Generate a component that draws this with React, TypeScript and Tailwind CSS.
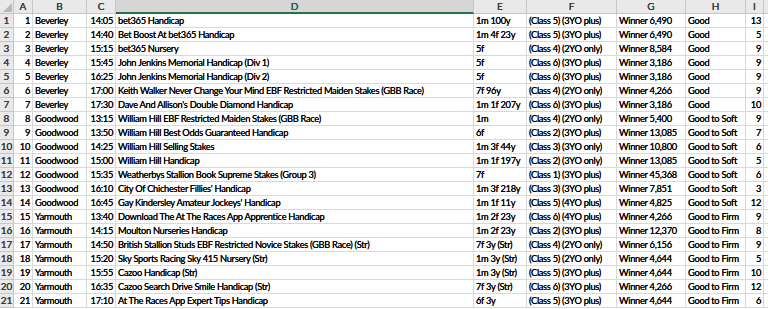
import React from "react";

const rows: [string, string, string, string, string, string, string, string, string][] = [
  ["1", "Beverley", "14:05", "bet365 Handicap", "1m 100y", "(Class 5) (3YO plus)", "Winner 6,490", "Good", "13"],
  ["2", "Beverley", "14:40", "Bet Boost At bet365 Handicap", "1m 4f 23y", "(Class 5) (3YO plus)", "Winner 6,490", "Good", "5"],
  ["3", "Beverley", "15:15", "bet365 Nursery", "5f", "(Class 4) (2YO only)", "Winner 8,584", "Good", "9"],
  ["4", "Beverley", "15:45", "John Jenkins Memorial Handicap (Div 1)", "5f", "(Class 6) (3YO plus)", "Winner 3,186", "Good", "9"],
  ["5", "Beverley", "16:25", "John Jenkins Memorial Handicap (Div 2)", "5f", "(Class 6) (3YO plus)", "Winner 3,186", "Good", "9"],
  ["6", "Beverley", "17:00", "Keith Walker Never Change Your Mind EBF Restricted Maiden Stakes (GBB Race)", "7f 96y", "(Class 4) (2YO only)", "Winner 4,266", "Good", "9"],
  ["7", "Beverley", "17:30", "Dave And Allison's Double Diamond Handicap", "1m 1f 207y", "(Class 6) (3YO plus)", "Winner 3,186", "Good", "10"],
  ["8", "Goodwood", "13:15", "William Hill EBF Restricted Maiden Stakes (GBB Race)", "1m", "(Class 4) (2YO only)", "Winner 5,400", "Good to Soft", "9"],
  ["9", "Goodwood", "13:50", "William Hill Best Odds Guaranteed Handicap", "6f", "(Class 2) (3YO plus)", "Winner 13,085", "Good to Soft", "7"],
  ["10", "Goodwood", "14:25", "William Hill Selling Stakes", "1m 3f 44y", "(Class 3) (3YO only)", "Winner 10,800", "Good to Soft", "6"],
  ["11", "Goodwood", "15:00", "William Hill Handicap", "1m 1f 197y", "(Class 2) (3YO only)", "Winner 13,085", "Good to Soft", "5"],
  ["12", "Goodwood", "15:35", "Weatherbys Stallion Book Supreme Stakes (Group 3)", "7f", "(Class 1) (3YO plus)", "Winner 45,368", "Good to Soft", "6"],
  ["13", "Goodwood", "16:10", "City Of Chichester Fillies' Handicap", "1m 3f 218y", "(Class 3) (3YO plus)", "Winner 7,851", "Good to Soft", "3"],
  ["14", "Goodwood", "16:45", "Gay Kindersley Amateur Jockeys' Handicap", "1m 1f 11y", "(Class 5) (4YO plus)", "Winner 4,825", "Good to Soft", "12"],
  ["15", "Yarmouth", "13:40", "Download The At The Races App Apprentice Handicap", "1m 2f 23y", "(Class 6) (4YO plus)", "Winner 4,266", "Good to Firm", "9"],
  ["16", "Yarmouth", "14:15", "Moulton Nurseries Handicap", "1m 2f 23y", "(Class 2) (3YO plus)", "Winner 12,370", "Good to Firm", "8"],
  ["17", "Yarmouth", "14:50", "British Stallion Studs EBF Restricted Novice Stakes (GBB Race) (Str)", "7f 3y (Str)", "(Class 4) (2YO only)", "Winner 6,156", "Good to Firm", "9"],
  ["18", "Yarmouth", "15:20", "Sky Sports Racing Sky 415 Nursery (Str)", "1m 3y (Str)", "(Class 5) (2YO only)", "Winner 4,644", "Good to Firm", "5"],
  ["19", "Yarmouth", "15:55", "Cazoo Handicap (Str)", "1m 3y (Str)", "(Class 5) (3YO plus)", "Winner 4,644", "Good to Firm", "10"],
  ["20", "Yarmouth", "16:35", "Cazoo Search Drive Smile Handicap (Str)", "7f 3y (Str)", "(Class 6) (3YO plus)", "Winner 4,266", "Good to Firm", "12"],
  ["21", "Yarmouth", "17:10", "At The Races App Expert Tips Handicap", "6f 3y", "(Class 5) (3YO plus)", "Winner 4,644", "Good to Firm", "6"],
];

const grid =
  "grid grid-cols-[14px_19px_54px_29px_358px_53px_90px_69px_60px_18px_40px]";
const cell =
  "h-[14px] border-b border-r border-[#d9d9d9] px-[2px] leading-[13px] whitespace-nowrap overflow-hidden text-black";
const hdr =
  "h-[14px] border-b border-r border-[#c6c6c6] bg-[#e9e9e9] text-center leading-[13px] text-[#444] tracking-normal text-[10px]";

export default function App() {
  const cols = ["A", "B", "C", "D", "E", "F", "G", "H", "I", ""];
  return (
    <div
      className="w-[768px] h-[309px] overflow-hidden bg-white text-[9.3px] tracking-[-0.3px] [text-shadow:0_0_0.2px_#000]"
      style={{ fontFamily: "Lato, 'Open Sans', sans-serif" }}
    >
      <div className={grid + " w-[786px]"}>
        <div className={hdr + " relative"}>
          <div className="absolute right-[1px] bottom-[1px] w-0 h-0 border-l-[9px] border-l-transparent border-b-[9px] border-b-[#b7b7b7]" />
        </div>
        {cols.map((c, i) =>
          c === "D" ? (
            <div
              key={i}
              className="h-[14px] border-b-2 border-b-[#217346] border-r border-r-[#c6c6c6] bg-[#d6d6d6] text-center leading-[13px] text-[#217346] text-[10px] tracking-normal"
            >
              D
            </div>
          ) : (
            <div key={i} className={hdr}>
              {c}
            </div>
          )
        )}
        {rows.map((r, ri) => (
          <React.Fragment key={ri}>
            <div className={hdr + " text-[#333]"}>{ri + 1}</div>
            <div className={cell + " text-right"}>{r[0]}</div>
            <div className={cell}>{r[1]}</div>
            <div className={cell + " text-right"}>{r[2]}</div>
            <div className={cell}>{r[3]}</div>
            <div className={cell}>{r[4]}</div>
            <div className={cell}>{r[5]}</div>
            <div className={cell}>{r[6]}</div>
            <div className={cell}>{r[7]}</div>
            <div className={cell + " text-right"}>{r[8]}</div>
            <div className={cell}></div>
          </React.Fragment>
        ))}
      </div>
    </div>
  );
}
